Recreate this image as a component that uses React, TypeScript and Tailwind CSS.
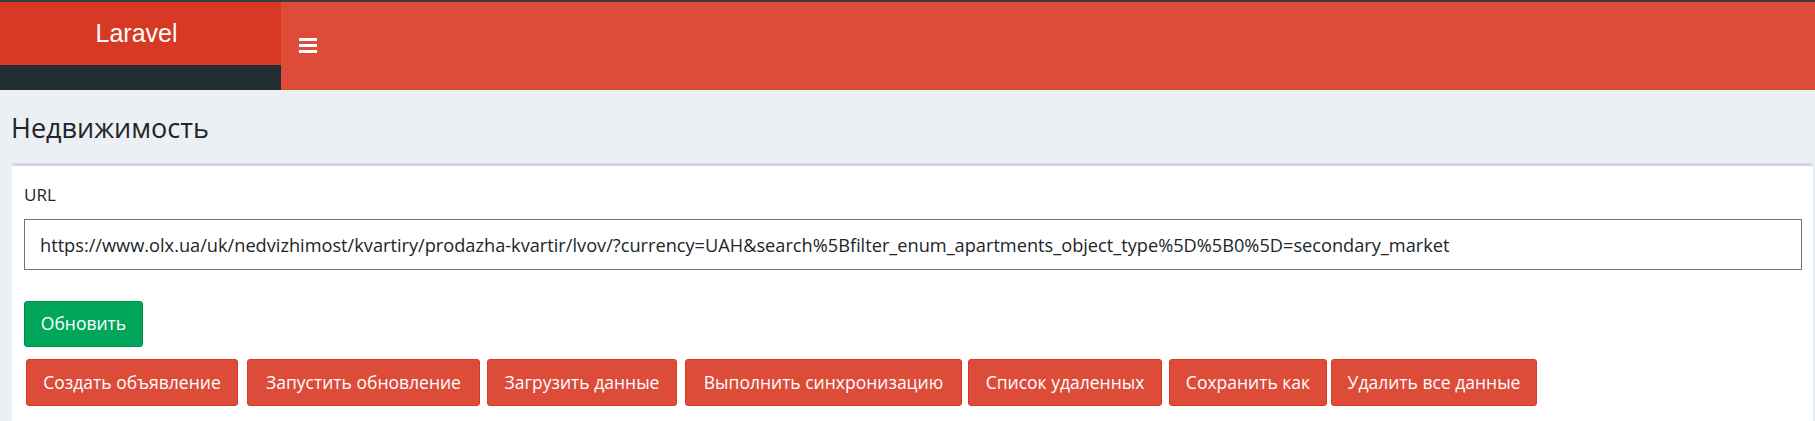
import React from "react";

const buttons: { label: string; w: number; ml: number }[] = [
  { label: "Создать объявление", w: 212, ml: 2 },
  { label: "Запустить обновление", w: 233, ml: 9 },
  { label: "Загрузить данные", w: 190, ml: 7 },
  { label: "Выполнить синхронизацию", w: 277, ml: 8 },
  { label: "Список удаленных", w: 194, ml: 6 },
  { label: "Сохранить как", w: 158, ml: 7 },
  { label: "Удалить все данные", w: 206, ml: 4 },
];

const mlClass: Record<number, string> = {
  2: "ml-[2px]",
  9: "ml-[9px]",
  7: "ml-[7px]",
  8: "ml-[8px]",
  6: "ml-[6px]",
  4: "ml-[4px]",
};
const wClass: Record<number, string> = {
  212: "w-[212px]",
  233: "w-[233px]",
  190: "w-[190px]",
  277: "w-[277px]",
  194: "w-[194px]",
  158: "w-[158px]",
  206: "w-[206px]",
};

export default function App() {
  const url =
    "https://www.olx.ua/uk/nedvizhimost/kvartiry/prodazha-kvartir/lvov/?currency=UAH&search%5Bfilter_enum_apartments_object_type%5D%5B0%5D=secondary_market";
  return (
    <div
      className="w-[1815px] h-[421px] overflow-hidden bg-[#ecf0f5] text-[#212529]"
      style={{ fontFamily: '"Open Sans", "Noto Sans", sans-serif' }}
    >
      <div className="h-[2px] bg-[#3c3c3c]" />
      <header className="flex h-[88px]">
        <div className="w-[281px] flex flex-col">
          <div
            className="h-[63px] bg-[#d73925] text-white flex justify-center pr-[8px] pt-[19px] text-[25px] leading-[25px]"
            style={{ fontFamily: '"Liberation Sans", Arial, sans-serif' }}
          >
            Laravel
          </div>
          <div className="h-[25px] bg-[#222d32]" />
        </div>
        <div className="flex-1 bg-[#dd4b39] pl-[18px] pt-[36px]">
          <div className="w-[18px] flex flex-col gap-[3px]">
            <div className="h-[3px] bg-white" />
            <div className="h-[3px] bg-white" />
            <div className="h-[3px] bg-white" />
          </div>
        </div>
      </header>
      <div className="pl-[11px] pt-[24px] text-[27px] leading-[27px] text-[#212529]">
        Недвижимость
      </div>
      <div className="ml-[12px] mr-[2px] mt-[22px] bg-white border-t-[3px] border-[#d2d6de] rounded-[3px] shadow-[0_1px_1px_rgba(0,0,0,0.1)] pl-[12px] pr-[11px] pt-[20px] h-[300px]">
        <div className="text-[17px] leading-[17px]">URL</div>
        <div className="mt-[16px] h-[51px] border border-[#6c757d] flex items-center pl-[15px] pt-[2px] text-[18.2px] whitespace-nowrap overflow-hidden">
          {url}
        </div>
        <div className="mt-[31px] flex">
          <button className="w-[119px] h-[46px] bg-[#00a65a] border border-[#008d4c] rounded-[3px] text-white text-[17.5px] leading-none flex items-center justify-center">
            Обновить
          </button>
        </div>
        <div className="mt-[12px] flex">
          {buttons.map((b) => (
            <button
              key={b.label}
              className={`${mlClass[b.ml]} ${wClass[b.w]} h-[47px] bg-[#dd4b39] border border-[#d73925] rounded-[3px] text-white text-[17.5px] leading-none flex items-center justify-center whitespace-nowrap`}
            >
              {b.label}
            </button>
          ))}
        </div>
      </div>
    </div>
  );
}
